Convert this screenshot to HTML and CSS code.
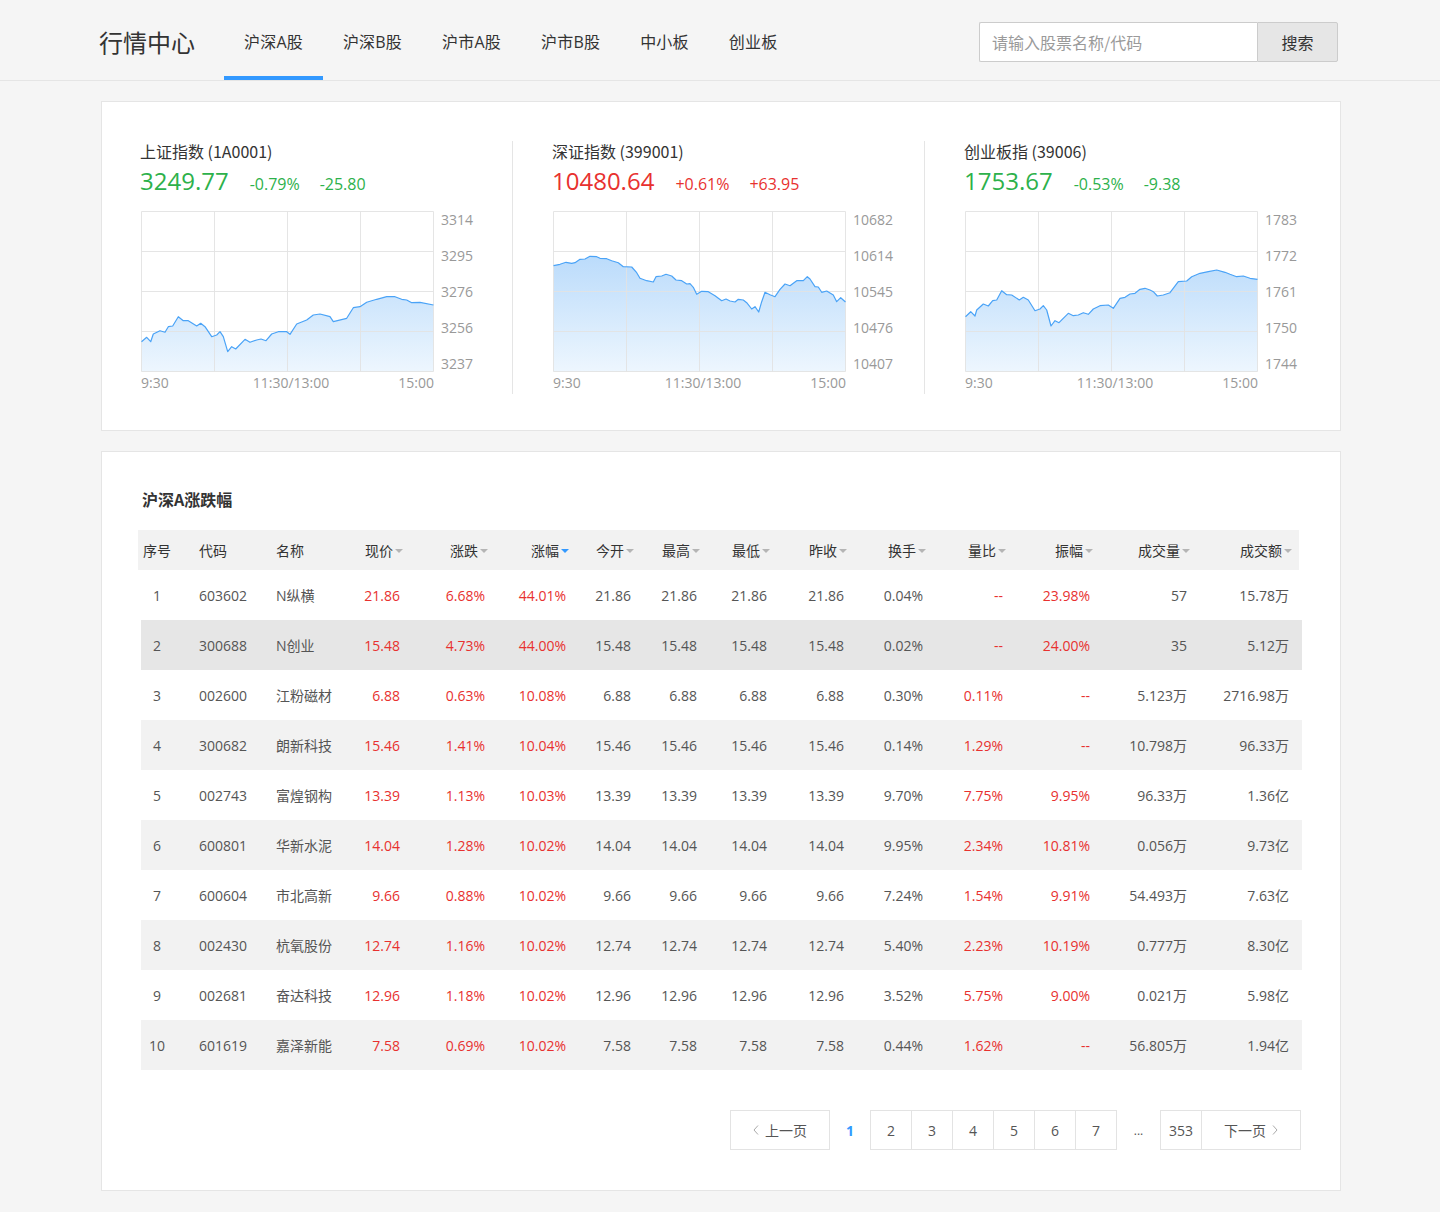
FILE: index.html
```html
<!DOCTYPE html>
<html lang="zh-CN">
<head>
<meta charset="utf-8">
<title>行情中心</title>
<link rel="stylesheet" href="styles.css">
</head>
<body>
<header class="topbar">
  <div class="topbar-inner">
    <div class="logo">行情中心</div>
    <nav class="nav">
      <a class="nav-item active">沪深A股</a>
      <a class="nav-item">沪深B股</a>
      <a class="nav-item">沪市A股</a>
      <a class="nav-item">沪市B股</a>
      <a class="nav-item">中小板</a>
      <a class="nav-item">创业板</a>
    </nav>
    <form class="search">
      <input class="search-input" type="text" placeholder="请输入股票名称/代码">
      <button class="search-btn" type="button">搜索</button>
    </form>
  </div>
</header>

<main class="page">
  <section class="card index-card">
    <div class="idx-col">
      <div class="idx-name">上证指数 (1A0001)</div>
      <div class="idx-vals down"><span class="idx-big">3249.77</span><span class="idx-small">-0.79%</span><span class="idx-small">-25.80</span></div>
      <div class="chart-row">
        <svg class="chart" width="293" height="161" viewBox="0 0 293 161">
          <defs>
            <linearGradient id="g1" x1="0" y1="0" x2="0" y2="160" gradientUnits="userSpaceOnUse">
              <stop offset="0.3" stop-color="#bcdcfb"/>
              <stop offset="1" stop-color="#edf6fe"/>
            </linearGradient>
          </defs>
          <path fill="url(#g1)" d="M0.5,130.7 L5.7,126.3 L9.7,130.7 L12.3,123 L19,119.7 L24,121.3 L27.3,115.7 L31.7,115 L37.3,105.7 L42.3,109.7 L47.3,109.7 L55.7,115 L59.7,112.3 L64,115.7 L70.7,125.7 L75.7,124 L79,120.7 L82.3,125.7 L86.7,140.7 L90.7,135.7 L94.7,138 L104,128.3 L109,131.3 L115.7,129 L120,128 L125,129.7 L130.7,123 L137.3,120.7 L145.7,120.7 L149,123.3 L155.7,113 L165.7,109 L172.3,104 L179,103 L189,105.7 L192.3,110.7 L205.7,107.3 L212.3,96.7 L219,95.7 L225.7,91.3 L235.7,88.3 L245.7,85.7 L254,85.7 L260.7,88.3 L265.7,89 L270.7,91.7 L279,91.3 L292.5,94 L292.5,160.5 L0.5,160.5 Z"/>
          <g class="grid">
            <path d="M0.5,0.5 H292.5 M0.5,40.5 H292.5 M0.5,80.5 H292.5 M0.5,120.5 H292.5 M0.5,160.5 H292.5 M0.5,0.5 V160.5 M73.5,0.5 V160.5 M146.5,0.5 V160.5 M219.5,0.5 V160.5 M292.5,0.5 V160.5"/>
          </g>
          <path class="line" d="M0.5,130.7 L5.7,126.3 L9.7,130.7 L12.3,123 L19,119.7 L24,121.3 L27.3,115.7 L31.7,115 L37.3,105.7 L42.3,109.7 L47.3,109.7 L55.7,115 L59.7,112.3 L64,115.7 L70.7,125.7 L75.7,124 L79,120.7 L82.3,125.7 L86.7,140.7 L90.7,135.7 L94.7,138 L104,128.3 L109,131.3 L115.7,129 L120,128 L125,129.7 L130.7,123 L137.3,120.7 L145.7,120.7 L149,123.3 L155.7,113 L165.7,109 L172.3,104 L179,103 L189,105.7 L192.3,110.7 L205.7,107.3 L212.3,96.7 L219,95.7 L225.7,91.3 L235.7,88.3 L245.7,85.7 L254,85.7 L260.7,88.3 L265.7,89 L270.7,91.7 L279,91.3 L292.5,94"/>
        </svg>
        <div class="y-axis"><span>3314</span><span>3295</span><span>3276</span><span>3256</span><span>3237</span></div>
      </div>
      <div class="x-axis"><span>9:30</span><span class="mid">11:30/13:00</span><span class="end">15:00</span></div>
    </div>

    <div class="idx-col sep">
      <div class="idx-name">深证指数 (399001)</div>
      <div class="idx-vals up"><span class="idx-big">10480.64</span><span class="idx-small">+0.61%</span><span class="idx-small">+63.95</span></div>
      <div class="chart-row">
        <svg class="chart" width="293" height="161" viewBox="0 0 293 161">
          <defs>
            <linearGradient id="g2" x1="0" y1="0" x2="0" y2="160" gradientUnits="userSpaceOnUse">
              <stop offset="0.3" stop-color="#bcdcfb"/>
              <stop offset="1" stop-color="#edf6fe"/>
            </linearGradient>
          </defs>
          <path fill="url(#g2)" d="M0.5,54.7 L7,53.3 L13,51.3 L18.7,52.3 L22,51.7 L27,48.3 L32,48 L37,45.3 L43.7,45.7 L47,47.3 L53.7,47.7 L58.7,49.7 L65.3,51.7 L70.3,55.7 L78.7,56 L83.7,61.7 L87,67.3 L93.7,69.7 L100.3,71 L103,65.7 L108.7,65 L113,63.3 L118.7,65 L123,69 L128.7,69.7 L133.7,73 L137,72.7 L140.3,76.3 L143.7,83.3 L148.7,80.3 L155.3,80.7 L162,84.7 L168.7,89.7 L173,88 L177,90 L182,91 L185.3,88.3 L190.3,89 L193.7,91.7 L198.7,98 L202,95.7 L205.7,101 L208.7,90.7 L212,81.3 L217,83.7 L222,85.7 L227,78.3 L232,73 L237,74.7 L243.7,69.7 L250.3,69.7 L254.3,65.7 L257,68 L262,75.7 L265.3,76 L268.7,81.3 L273.7,80 L280.3,84 L283.7,90.7 L287.7,86.7 L292.5,91 L292.5,160.5 L0.5,160.5 Z"/>
          <g class="grid">
            <path d="M0.5,0.5 H292.5 M0.5,40.5 H292.5 M0.5,80.5 H292.5 M0.5,120.5 H292.5 M0.5,160.5 H292.5 M0.5,0.5 V160.5 M73.5,0.5 V160.5 M146.5,0.5 V160.5 M219.5,0.5 V160.5 M292.5,0.5 V160.5"/>
          </g>
          <path class="line" d="M0.5,54.7 L7,53.3 L13,51.3 L18.7,52.3 L22,51.7 L27,48.3 L32,48 L37,45.3 L43.7,45.7 L47,47.3 L53.7,47.7 L58.7,49.7 L65.3,51.7 L70.3,55.7 L78.7,56 L83.7,61.7 L87,67.3 L93.7,69.7 L100.3,71 L103,65.7 L108.7,65 L113,63.3 L118.7,65 L123,69 L128.7,69.7 L133.7,73 L137,72.7 L140.3,76.3 L143.7,83.3 L148.7,80.3 L155.3,80.7 L162,84.7 L168.7,89.7 L173,88 L177,90 L182,91 L185.3,88.3 L190.3,89 L193.7,91.7 L198.7,98 L202,95.7 L205.7,101 L208.7,90.7 L212,81.3 L217,83.7 L222,85.7 L227,78.3 L232,73 L237,74.7 L243.7,69.7 L250.3,69.7 L254.3,65.7 L257,68 L262,75.7 L265.3,76 L268.7,81.3 L273.7,80 L280.3,84 L283.7,90.7 L287.7,86.7 L292.5,91"/>
        </svg>
        <div class="y-axis"><span>10682</span><span>10614</span><span>10545</span><span>10476</span><span>10407</span></div>
      </div>
      <div class="x-axis"><span>9:30</span><span class="mid">11:30/13:00</span><span class="end">15:00</span></div>
    </div>

    <div class="idx-col sep">
      <div class="idx-name">创业板指 (39006)</div>
      <div class="idx-vals down"><span class="idx-big">1753.67</span><span class="idx-small">-0.53%</span><span class="idx-small">-9.38</span></div>
      <div class="chart-row">
        <svg class="chart" width="293" height="161" viewBox="0 0 293 161">
          <defs>
            <linearGradient id="g3" x1="0" y1="0" x2="0" y2="160" gradientUnits="userSpaceOnUse">
              <stop offset="0.3" stop-color="#bcdcfb"/>
              <stop offset="1" stop-color="#edf6fe"/>
            </linearGradient>
          </defs>
          <path fill="url(#g3)" d="M0.5,105.7 L5.7,100.7 L10,105 L11.7,99 L18.3,93 L23.3,95 L27.7,89.7 L31.7,89 L36.7,79.7 L41.7,83.7 L46.7,84 L54.3,89 L58.3,86.3 L63.3,89 L70,99.7 L75,98 L78.3,94.7 L81.7,99 L86,115 L90,109.7 L94,111.7 L103.3,102.3 L108.3,104.7 L113.3,104 L118.3,101.7 L123.3,103.3 L128.3,98 L135,94.7 L143.3,94 L148.3,97.3 L155,87.3 L160,86.3 L165,83 L170,82.3 L175,78.3 L180,77.3 L185,79 L188.3,80.7 L192.3,85 L198.3,84 L205,81.7 L213.3,70.7 L221.7,70 L226.7,65.7 L235,62.3 L243.3,60.7 L251.7,59 L260,61.3 L265,63.3 L271.7,65.7 L278.3,65 L285,67.3 L292.5,68.3 L292.5,160.5 L0.5,160.5 Z"/>
          <g class="grid">
            <path d="M0.5,0.5 H292.5 M0.5,40.5 H292.5 M0.5,80.5 H292.5 M0.5,120.5 H292.5 M0.5,160.5 H292.5 M0.5,0.5 V160.5 M73.5,0.5 V160.5 M146.5,0.5 V160.5 M219.5,0.5 V160.5 M292.5,0.5 V160.5"/>
          </g>
          <path class="line" d="M0.5,105.7 L5.7,100.7 L10,105 L11.7,99 L18.3,93 L23.3,95 L27.7,89.7 L31.7,89 L36.7,79.7 L41.7,83.7 L46.7,84 L54.3,89 L58.3,86.3 L63.3,89 L70,99.7 L75,98 L78.3,94.7 L81.7,99 L86,115 L90,109.7 L94,111.7 L103.3,102.3 L108.3,104.7 L113.3,104 L118.3,101.7 L123.3,103.3 L128.3,98 L135,94.7 L143.3,94 L148.3,97.3 L155,87.3 L160,86.3 L165,83 L170,82.3 L175,78.3 L180,77.3 L185,79 L188.3,80.7 L192.3,85 L198.3,84 L205,81.7 L213.3,70.7 L221.7,70 L226.7,65.7 L235,62.3 L243.3,60.7 L251.7,59 L260,61.3 L265,63.3 L271.7,65.7 L278.3,65 L285,67.3 L292.5,68.3"/>
        </svg>
        <div class="y-axis"><span>1783</span><span>1772</span><span>1761</span><span>1750</span><span>1744</span></div>
      </div>
      <div class="x-axis"><span>9:30</span><span class="mid">11:30/13:00</span><span class="end">15:00</span></div>
    </div>
  </section>

  <section class="card table-card">
    <h2 class="table-title">沪深A涨跌幅</h2>
    <div class="tbl">
      <div class="tr th">
        <span class="c-no">序号</span>
        <span class="c-l">代码</span>
        <span class="c-l">名称</span>
        <span class="c-r">现价<i class="caret"></i></span>
        <span class="c-r">涨跌<i class="caret"></i></span>
        <span class="c-r">涨幅<i class="caret on"></i></span>
        <span class="c-r">今开<i class="caret"></i></span>
        <span class="c-r">最高<i class="caret"></i></span>
        <span class="c-r">最低<i class="caret"></i></span>
        <span class="c-r">昨收<i class="caret"></i></span>
        <span class="c-r">换手<i class="caret"></i></span>
        <span class="c-r">量比<i class="caret"></i></span>
        <span class="c-r">振幅<i class="caret"></i></span>
        <span class="c-r">成交量<i class="caret"></i></span>
        <span class="c-r">成交额<i class="caret"></i></span>
      </div>

      <div class="tr">
        <span class="c-no">1</span><span class="c-l">603602</span><span class="c-l">N纵横</span>
        <span class="c-r red">21.86</span><span class="c-r red">6.68%</span><span class="c-r red">44.01%</span>
        <span class="c-r">21.86</span><span class="c-r">21.86</span><span class="c-r">21.86</span><span class="c-r">21.86</span>
        <span class="c-r">0.04%</span><span class="c-r red">--</span><span class="c-r red">23.98%</span><span class="c-r">57</span><span class="c-r">15.78万</span>
      </div>
      <div class="tr hover">
        <span class="c-no">2</span><span class="c-l">300688</span><span class="c-l">N创业</span>
        <span class="c-r red">15.48</span><span class="c-r red">4.73%</span><span class="c-r red">44.00%</span>
        <span class="c-r">15.48</span><span class="c-r">15.48</span><span class="c-r">15.48</span><span class="c-r">15.48</span>
        <span class="c-r">0.02%</span><span class="c-r red">--</span><span class="c-r red">24.00%</span><span class="c-r">35</span><span class="c-r">5.12万</span>
      </div>
      <div class="tr">
        <span class="c-no">3</span><span class="c-l">002600</span><span class="c-l">江粉磁材</span>
        <span class="c-r red">6.88</span><span class="c-r red">0.63%</span><span class="c-r red">10.08%</span>
        <span class="c-r">6.88</span><span class="c-r">6.88</span><span class="c-r">6.88</span><span class="c-r">6.88</span>
        <span class="c-r">0.30%</span><span class="c-r red">0.11%</span><span class="c-r red">--</span><span class="c-r">5.123万</span><span class="c-r">2716.98万</span>
      </div>
      <div class="tr alt">
        <span class="c-no">4</span><span class="c-l">300682</span><span class="c-l">朗新科技</span>
        <span class="c-r red">15.46</span><span class="c-r red">1.41%</span><span class="c-r red">10.04%</span>
        <span class="c-r">15.46</span><span class="c-r">15.46</span><span class="c-r">15.46</span><span class="c-r">15.46</span>
        <span class="c-r">0.14%</span><span class="c-r red">1.29%</span><span class="c-r red">--</span><span class="c-r">10.798万</span><span class="c-r">96.33万</span>
      </div>
      <div class="tr">
        <span class="c-no">5</span><span class="c-l">002743</span><span class="c-l">富煌钢构</span>
        <span class="c-r red">13.39</span><span class="c-r red">1.13%</span><span class="c-r red">10.03%</span>
        <span class="c-r">13.39</span><span class="c-r">13.39</span><span class="c-r">13.39</span><span class="c-r">13.39</span>
        <span class="c-r">9.70%</span><span class="c-r red">7.75%</span><span class="c-r red">9.95%</span><span class="c-r">96.33万</span><span class="c-r">1.36亿</span>
      </div>
      <div class="tr alt">
        <span class="c-no">6</span><span class="c-l">600801</span><span class="c-l">华新水泥</span>
        <span class="c-r red">14.04</span><span class="c-r red">1.28%</span><span class="c-r red">10.02%</span>
        <span class="c-r">14.04</span><span class="c-r">14.04</span><span class="c-r">14.04</span><span class="c-r">14.04</span>
        <span class="c-r">9.95%</span><span class="c-r red">2.34%</span><span class="c-r red">10.81%</span><span class="c-r">0.056万</span><span class="c-r">9.73亿</span>
      </div>
      <div class="tr">
        <span class="c-no">7</span><span class="c-l">600604</span><span class="c-l">市北高新</span>
        <span class="c-r red">9.66</span><span class="c-r red">0.88%</span><span class="c-r red">10.02%</span>
        <span class="c-r">9.66</span><span class="c-r">9.66</span><span class="c-r">9.66</span><span class="c-r">9.66</span>
        <span class="c-r">7.24%</span><span class="c-r red">1.54%</span><span class="c-r red">9.91%</span><span class="c-r">54.493万</span><span class="c-r">7.63亿</span>
      </div>
      <div class="tr alt">
        <span class="c-no">8</span><span class="c-l">002430</span><span class="c-l">杭氧股份</span>
        <span class="c-r red">12.74</span><span class="c-r red">1.16%</span><span class="c-r red">10.02%</span>
        <span class="c-r">12.74</span><span class="c-r">12.74</span><span class="c-r">12.74</span><span class="c-r">12.74</span>
        <span class="c-r">5.40%</span><span class="c-r red">2.23%</span><span class="c-r red">10.19%</span><span class="c-r">0.777万</span><span class="c-r">8.30亿</span>
      </div>
      <div class="tr">
        <span class="c-no">9</span><span class="c-l">002681</span><span class="c-l">奋达科技</span>
        <span class="c-r red">12.96</span><span class="c-r red">1.18%</span><span class="c-r red">10.02%</span>
        <span class="c-r">12.96</span><span class="c-r">12.96</span><span class="c-r">12.96</span><span class="c-r">12.96</span>
        <span class="c-r">3.52%</span><span class="c-r red">5.75%</span><span class="c-r red">9.00%</span><span class="c-r">0.021万</span><span class="c-r">5.98亿</span>
      </div>
      <div class="tr alt">
        <span class="c-no">10</span><span class="c-l">601619</span><span class="c-l">嘉泽新能</span>
        <span class="c-r red">7.58</span><span class="c-r red">0.69%</span><span class="c-r red">10.02%</span>
        <span class="c-r">7.58</span><span class="c-r">7.58</span><span class="c-r">7.58</span><span class="c-r">7.58</span>
        <span class="c-r">0.44%</span><span class="c-r red">1.62%</span><span class="c-r red">--</span><span class="c-r">56.805万</span><span class="c-r">1.94亿</span>
      </div>
    </div>

    <div class="pager">
      <a class="pg pg-wide"><svg class="chev" width="6" height="10" viewBox="0 0 6 10"><path d="M5,0.5 L1,5 L5,9.5"/></svg>上一页</a>
      <a class="pg pg-cur">1</a>
      <a class="pg">2</a>
      <a class="pg">3</a>
      <a class="pg">4</a>
      <a class="pg">5</a>
      <a class="pg">6</a>
      <a class="pg">7</a>
      <span class="pg pg-dots">...</span>
      <a class="pg">353</a>
      <a class="pg pg-wide">下一页<svg class="chev r" width="6" height="10" viewBox="0 0 6 10"><path d="M1,0.5 L5,5 L1,9.5"/></svg></a>
    </div>
  </section>
</main>
</body>
</html>
```

FILE: styles.css
```css
* { box-sizing: border-box; }

html, body {
  margin: 0;
  padding: 0;
  background: #f5f5f5;
}

body {
  font-family: "Open Sans", "Noto Sans CJK SC", sans-serif;
  color: #333;
  font-size: 14px;
}

/* ---------- top bar ---------- */
.topbar {
  height: 81px;
  border-bottom: 1px solid #e5e5e5;
  background: #f5f5f5;
}

.topbar-inner {
  width: 1240px;
  margin: 0 auto;
  height: 80px;
  display: flex;
  align-items: center;
}

.logo {
  font-family: "Noto Sans CJK SC", sans-serif;
  font-size: 24px;
  line-height: 32px;
  color: #333;
  margin-left: -1px;
  margin-top: 4px;
  width: 125px;
  flex: none;
}

.nav {
  display: flex;
  height: 80px;
  align-self: stretch;
}

.nav-item {
  display: block;
  padding: 4px 20px 0;
  height: 80px;
  line-height: 76px;
  font-size: 16px;
  letter-spacing: 0.2px;
  color: #333;
  font-family: "Open Sans", "Noto Sans CJK SC", sans-serif;
  cursor: pointer;
}

.nav-item.active {
  box-shadow: inset 0 -4px 0 #3399ff;
}

.search {
  margin-left: auto;
  margin-right: 2px;
  display: flex;
  height: 40px;
  margin-top: 4px;
}

.search-input {
  width: 278px;
  height: 40px;
  border: 1px solid #ccc;
  border-right: none;
  border-radius: 2px 0 0 2px;
  padding: 0 12px;
  font-size: 16px;
  font-family: "Noto Sans CJK SC", sans-serif;
  color: #333;
  background: #fff;
  outline: none;
}

.search-input::placeholder { color: #9a9a9a; }

.search-btn {
  width: 81px;
  height: 40px;
  border: 1px solid #ccc;
  border-radius: 0 2px 2px 0;
  background: #e6e6e6;
  font-size: 16px;
  font-family: "Noto Sans CJK SC", sans-serif;
  color: #333;
  padding: 0;
}

/* ---------- page ---------- */
.page {
  width: 1240px;
  margin: 0 auto;
  padding: 20px 0 21px 1px;
  display: flex;
  flex-direction: column;
  gap: 20px;
}

.card {
  background: #fff;
  border: 1px solid #e5e5e5;
  width: 1240px;
}

/* ---------- index card ---------- */
.index-card {
  display: grid;
  grid-template-columns: 372px 412px 412px;
  padding: 39px 0 36px 38px;
}

.idx-col.sep {
  border-left: 1px solid #e5e5e5;
  padding-left: 39px;
}

.idx-name {
  font-size: 16px;
  line-height: 20px;
  color: #333;
  font-family: "Noto Sans CJK SC", sans-serif;
}

.idx-vals {
  margin-top: 4px;
  height: 32px;
  display: flex;
  align-items: baseline;
  line-height: 32px;
}

.idx-big {
  font-size: 24px;
  margin-right: 21px;
}

.idx-small {
  font-size: 16px;
  margin-right: 20px;
}

.down { color: #2db14b; }
.up { color: #e8312f; }

.chart-row {
  margin-top: 14px;
  margin-left: 1px;
  display: flex;
  height: 161px;
}

.chart { display: block; flex: none; }
.chart .grid path { stroke: #e2e2e2; stroke-width: 1; fill: none; opacity: 0.9; }
.chart .line { stroke: #4aa3f7; stroke-width: 1.2; fill: none; stroke-linejoin: round; }

.y-axis {
  margin-left: 7px;
  padding-top: 1px;
  display: flex;
  flex-direction: column;
  justify-content: space-between;
  height: 161px;
  font-size: 14px;
  line-height: 16px;
  color: #999;
}

.x-axis {
  width: 293px;
  margin-left: 1px;
  display: grid;
  grid-template-columns: 1fr auto 1fr;
  font-size: 14px;
  line-height: 22px;
  color: #999;
}

.x-axis .mid { padding-left: 7px; }
.x-axis .end { text-align: right; }

/* ---------- table card ---------- */
.table-card {
  padding: 35px 38px 40px 39px;
}

.table-title {
  margin: 0 0 0 1px;
  font-size: 16px;
  line-height: 24px;
  font-weight: 700;
  color: #333;
  font-family: "Noto Sans CJK SC", sans-serif;
}

.tbl {
  margin-top: 19px;
}

.tr {
  display: grid;
  grid-template-columns: 58px 77px 64px 60px 85px 81px 65px 66px 70px 77px 79px 80px 87px 97px 102px;
  height: 50px;
  align-items: center;
  padding-right: 12px;
  font-size: 14px;
  color: #555;
  white-space: nowrap;
}

.tr span { font-family: "Open Sans", "Noto Sans CJK SC", sans-serif; }

.tr.th {
  height: 40px;
  background: #f2f2f2;
  margin-left: -3px;
  margin-right: 3px;
  padding-left: 3px;
  padding-right: 9px;
  color: #333;
}

.tr.th span { font-family: "Noto Sans CJK SC", sans-serif; }

.tr.alt { background: #f2f2f2; }
.tr.hover { background: #e6e6e6; }

.c-no { text-align: center; padding-right: 26px; }
.c-l { text-align: left; }
.c-r { text-align: right; }

.th .c-r {
  display: flex;
  justify-content: flex-end;
  align-items: center;
  margin-right: -3px;
}

.caret {
  display: inline-block;
  width: 0;
  height: 0;
  margin-left: 2px;
  margin-top: 1px;
  border-left: 4px solid transparent;
  border-right: 4px solid transparent;
  border-top: 4px solid #b5b5b5;
}

.caret.on { border-top-color: #3399ff; }

.red { color: #e8312f; }

/* ---------- pager ---------- */
.pager {
  margin-top: 40px;
  margin-right: 1px;
  display: flex;
  justify-content: flex-end;
  height: 40px;
}

.pg {
  display: flex;
  align-items: center;
  justify-content: center;
  width: 42px;
  height: 40px;
  border: 1px solid #e3e3e3;
  margin-left: -1px;
  font-size: 14px;
  color: #555;
  font-family: "Open Sans", "Noto Sans CJK SC", sans-serif;
  background: #fff;
  cursor: pointer;
}

.pg-wide { width: 100px; }

.pg-cur {
  border-color: transparent;
  color: #3399ff;
  font-weight: 700;
  margin-left: 0;
  margin-right: 1px;
  width: 40px;
}

.pg-dots {
  border-color: transparent;
  width: 43px;
  margin-left: 0;
  margin-right: 1px;
  font-size: 12px;
}

.chev { margin-right: 6px; }
.chev.r { margin-right: 0; margin-left: 6px; }
.chev path { stroke: #aaa; stroke-width: 1; fill: none; }
```
